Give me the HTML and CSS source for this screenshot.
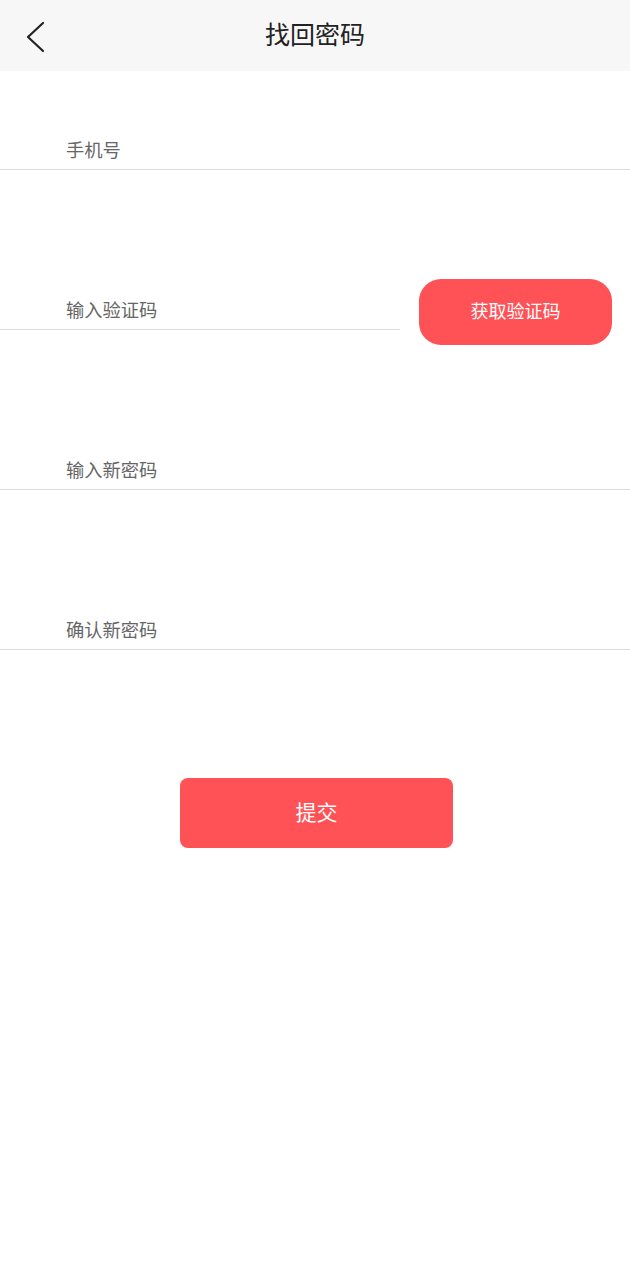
FILE: index.html
```html
<!DOCTYPE html>
<html lang="zh">
<head>
<meta charset="utf-8">
<title>找回密码</title>
<link rel="stylesheet" href="styles.css">
</head>
<body>
<header class="topbar">
  <span class="back">
    <svg width="20" height="32" viewBox="0 0 20 32"><path d="M17 2 L2 16 L17 30" fill="none" stroke="#222" stroke-width="2.2" stroke-linecap="round" stroke-linejoin="round"/></svg>
  </span>
  <h1 class="title">找回密码</h1>
</header>
<main class="form">
  <div class="row"><span class="field">手机号</span></div>
  <div class="row row-code">
    <span class="field field-code">输入验证码</span>
    <button class="code-btn">获取验证码</button>
  </div>
  <div class="row"><span class="field">输入新密码</span></div>
  <div class="row"><span class="field">确认新密码</span></div>
  <button class="submit">提交</button>
</main>
</body>
</html>
```

FILE: styles.css
```css
* { box-sizing: border-box; }
html, body { margin: 0; padding: 0; background: #fff; }
body {
  font-family: "Noto Sans CJK SC", "Noto Sans", sans-serif;
  width: 630px;
}
.topbar {
  position: relative;
  height: 71px;
  background: #f7f7f7;
  display: flex;
  align-items: center;
  justify-content: center;
}
.back {
  position: absolute;
  left: 26px;
  top: 21px;
  width: 20px;
  height: 32px;
  display: flex;
}
.title {
  margin: 0 0 4px;
  font-size: 25px;
  font-weight: 400;
  color: #222;
  line-height: 1;
}
.form {
  padding-top: 39px;
  display: flex;
  flex-direction: column;
}
.row {
  height: 60px;
  margin-bottom: 100px;
  display: flex;
  align-items: flex-end;
  border-bottom: 1px solid #dcdcdc;
}
.row-code {
  border-bottom: none;
  align-items: flex-start;
}
.field {
  display: flex;
  align-items: flex-end;
  padding-left: 66px;
  padding-bottom: 11px;
  font-size: 18.3px;
  color: #666;
  line-height: 1;
}
.field-code {
  width: 400px;
  height: 60px;
  border-bottom: 1px solid #dcdcdc;
}
.code-btn {
  flex: none;
  margin-left: 19px;
  margin-top: 9px;
  width: 193px;
  height: 66px;
  border: none;
  border-radius: 22px;
  background: #fe5257;
  color: #fff;
  font-family: inherit;
  font-size: 18px;
  padding: 0 0 4px;
}
.row:last-of-type { margin-bottom: 0; }
.submit {
  align-self: center;
  margin-top: 128px;
  margin-left: 3px;
  width: 273px;
  height: 70px;
  border: none;
  border-radius: 8px;
  background: #fe5257;
  color: #fff;
  font-family: inherit;
  font-size: 21px;
  padding: 0 0 5px;
}
```
